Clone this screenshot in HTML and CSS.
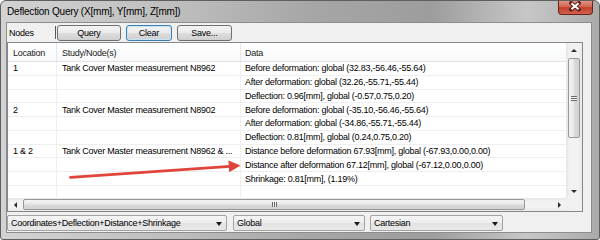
FILE: index.html
```html
<!DOCTYPE html>
<html lang="en">
<head>
    <meta charset="UTF-8">
    <title>Deflection Query</title>
    <link rel="stylesheet" href="styles.css">
</head>
<body>
    <div class="window">
        <div class="titlebar">
            <span class="title">Deflection Query (X[mm], Y[mm], Z[mm])</span>
            <div class="close-btn">
                <svg width="35" height="15" viewBox="0 0 35 15">
                    <path d="M13.5 4 L21.5 10.5 M21.5 4 L13.5 10.5" stroke="#5a1a12" stroke-width="4" stroke-linecap="round"/>
                    <path d="M13.8 4.2 L21.2 10.3 M21.2 4.2 L13.8 10.3" stroke="#fff" stroke-width="2.2"/>
                </svg>
            </div>
        </div>

        <div class="client">
            <div class="toolbar">
                <span class="nodes-label">Nodes</span>
                <span class="sep"></span>
                <button class="btn btn-query">Query</button>
                <button class="btn btn-clear">Clear</button>
                <button class="btn btn-save">Save...</button>
            </div>

            <div class="listview">
                <div class="table">
                    <div class="row header">
                        <div class="cell c1">Location</div>
                        <div class="cell c2">Study/Node(s)</div>
                        <div class="cell c3">Data</div>
                    </div>
                    <div class="row">
                        <div class="cell c1">1</div>
                        <div class="cell c2">Tank Cover Master measurement N8962</div>
                        <div class="cell c3">Before deformation: global (32.83,-56.46,-55.64)</div>
                    </div>
                    <div class="row">
                        <div class="cell c1"></div>
                        <div class="cell c2"></div>
                        <div class="cell c3">After deformation: global (32.26,-55.71,-55.44)</div>
                    </div>
                    <div class="row">
                        <div class="cell c1"></div>
                        <div class="cell c2"></div>
                        <div class="cell c3">Deflection: 0.96[mm], global (-0.57,0.75,0.20)</div>
                    </div>
                    <div class="row">
                        <div class="cell c1">2</div>
                        <div class="cell c2">Tank Cover Master measurement N8902</div>
                        <div class="cell c3">Before deformation: global (-35.10,-56.46,-55.64)</div>
                    </div>
                    <div class="row">
                        <div class="cell c1"></div>
                        <div class="cell c2"></div>
                        <div class="cell c3">After deformation: global (-34.86,-55.71,-55.44)</div>
                    </div>
                    <div class="row">
                        <div class="cell c1"></div>
                        <div class="cell c2"></div>
                        <div class="cell c3">Deflection: 0.81[mm], global (0.24,0.75,0.20)</div>
                    </div>
                    <div class="row">
                        <div class="cell c1">1 &amp; 2</div>
                        <div class="cell c2">Tank Cover Master measurement N8962 &amp; ...</div>
                        <div class="cell c3">Distance before deformation 67.93[mm], global (-67.93,0.00,0.00)</div>
                    </div>
                    <div class="row">
                        <div class="cell c1"></div>
                        <div class="cell c2"></div>
                        <div class="cell c3">Distance after deformation 67.12[mm], global (-67.12,0.00,0.00)</div>
                    </div>
                    <div class="row">
                        <div class="cell c1"></div>
                        <div class="cell c2"></div>
                        <div class="cell c3">Shrinkage: 0.81[mm], (1.19%)</div>
                    </div>
                    <div class="row filler">
                        <div class="cell c1"></div>
                        <div class="cell c2"></div>
                        <div class="cell c3"></div>
                    </div>
                </div>

                <div class="vscroll">
                    <div class="sb-btn"><span class="arr arr-up"></span></div>
                    <div class="thumb-v"><span class="grip-v"></span></div>
                    <div class="sb-space"></div>
                    <div class="sb-btn"><span class="arr arr-down"></span></div>
                </div>
                <div class="hscroll">
                    <div class="sb-btn-h"><span class="arr arr-left"></span></div>
                    <div class="thumb-h"><span class="grip-h"></span></div>
                    <div class="sb-space"></div>
                    <div class="sb-btn-h"><span class="arr arr-right"></span></div>
                </div>
                <div class="corner"></div>
            </div>

            <div class="combos">
                <div class="combo combo-mode">Coordinates+Deflection+Distance+Shrinkage<span class="drop"></span></div>
                <div class="combo combo-frame">Global<span class="drop"></span></div>
                <div class="combo combo-sys">Cartesian<span class="drop"></span></div>
            </div>
        </div>

        <!-- red callout arrow drawn over the list -->
        <svg class="callout" width="600" height="240" viewBox="0 0 600 240">
            <path d="M70.5 177.4 L230 166.3" stroke="#e0443b" stroke-width="2.8" stroke-linecap="round"/>
            <polygon points="240.5,165.4 228.4,160.4 229.3,172.2" fill="#e0443b"/>
        </svg>
    </div>
</body>
</html>
```

FILE: styles.css
```css
body {
    margin: 0;
    background: #ffffff;
    font-family: "Liberation Sans", Arial, sans-serif;
}

.window {
    position: relative;
    width: 600px;
    height: 240px;
    box-sizing: border-box;
    border: 1px solid #5f5f5f;
    border-radius: 6px 6px 3px 3px;
    background: linear-gradient(to right, #d3d3d3 0%, #bdbdbd 30%, #a6a6a6 52%, #9d9d9d 72%, #c7c7c7 88%, #aaaaaa 100%);
    display: flex;
    flex-direction: column;
    overflow: hidden;
}

.titlebar {
    height: 21px;
    flex-shrink: 0;
    display: flex;
    justify-content: space-between;
    align-items: center;
    padding-left: 6px;
}

.title {
    font-size: 10px;
    letter-spacing: -0.2px;
    color: #000;
}

.close-btn {
    align-self: flex-start;
    margin-top: -1px;
    margin-right: 6px;
    width: 35px;
    height: 15px;
    box-sizing: border-box;
    border: 1px solid #6b2319;
    border-top: none;
    border-radius: 0 0 4px 4px;
    background: linear-gradient(#e3998b, #d26a58 45%, #c0402c 55%, #d0634f);
    display: flex;
}

.close-btn svg {
    margin: -1px 0 0 -1px;
}

.client {
    flex: 1;
    margin: 0 7px 6px 5px;
    border: 1px solid #8d8d8d;
    background: #f0f0f0;
    display: flex;
    flex-direction: column;
    padding-right: 8px;
    font-size: 9px;
    letter-spacing: -0.25px;
    color: #000;
}

/* toolbar */

.toolbar {
    height: 19px;
    flex-shrink: 0;
    display: flex;
    align-items: center;
}

.nodes-label {
    width: 46px;
    padding-left: 2px;
}

.sep {
    width: 1px;
    height: 13px;
    background: #5a5a5a;
}

.btn {
    height: 16px;
    margin: 0 0 0 5px;
    padding: 0;
    box-sizing: border-box;
    border: 1px solid #707070;
    border-radius: 3px;
    background: linear-gradient(#f3f3f3, #ebebeb 48%, #dddddd 52%, #cfcfcf);
    font-family: inherit;
    font-size: 9px;
    letter-spacing: -0.25px;
    color: #000;
}

.btn-query {
    width: 64px;
    margin-left: 1px;
}

.btn-clear {
    width: 46px;
    border-color: #3c7fb1;
    box-shadow: inset 0 0 0 1px #c6e6f8;
}

.btn-save {
    width: 55px;
}

/* list view */

.listview {
    height: 170px;
    flex-shrink: 0;
    box-sizing: border-box;
    border: 1px solid #828790;
    background: #ffffff;
    display: grid;
    grid-template-columns: 1fr 16px;
    grid-template-rows: 1fr 13px;
}

.table {
    display: flex;
    flex-direction: column;
    overflow: hidden;
}

.row {
    display: flex;
    height: 13.78px;
    flex-shrink: 0;
    box-sizing: border-box;
    border-bottom: 1px solid #efefef;
}

.row.header {
    height: 19px;
    border-bottom: 1px solid #e2e2e2;
    background: linear-gradient(#ffffff, #f7f8fa);
    color: #1a1a1a;
}

.row.filler {
    flex: 1;
    border-bottom: none;
}

.cell {
    box-sizing: border-box;
    border-right: 1px solid #efefef;
    display: flex;
    align-items: center;
    white-space: nowrap;
    overflow: hidden;
}

.header .cell {
    border-right-color: #e3e6ea;
    padding-top: 1px;
}

.c1 {
    width: 49px;
    padding-left: 5px;
}

.c2 {
    width: 184px;
    padding-left: 5px;
}

.c3 {
    flex: 1;
    padding-left: 4px;
    border-right: none;
}

/* scroll bars */

.vscroll {
    display: flex;
    flex-direction: column;
    background: linear-gradient(to right, #e6e6e6, #f2f2f2 25%, #f2f2f2 75%, #e9e9e9);
}

.sb-btn {
    height: 14px;
    display: flex;
    justify-content: center;
    align-items: center;
}

.sb-space {
    flex: 1;
}

.thumb-v {
    height: 80px;
    margin: 1px 2px 0 2px;
    box-sizing: border-box;
    border: 1px solid #979797;
    border-radius: 2px;
    background: linear-gradient(to right, #f4f4f4, #e9e9e9 45%, #d9d9d9 55%, #d2d2d2);
    display: flex;
    justify-content: center;
    align-items: center;
}

.grip-v {
    width: 6px;
    height: 5px;
    background: repeating-linear-gradient(#6a6a6a 0 1px, #f0f0f0 1px 2px);
}

.hscroll {
    display: flex;
    background: linear-gradient(#e6e6e6, #f2f2f2 25%, #f2f2f2 75%, #e9e9e9);
}

.sb-btn-h {
    width: 14px;
    display: flex;
    justify-content: center;
    align-items: center;
}

.thumb-h {
    width: 502px;
    margin: 1px 0 1px 1px;
    box-sizing: border-box;
    border: 1px solid #979797;
    border-radius: 2px;
    background: linear-gradient(#f4f4f4, #e9e9e9 45%, #d9d9d9 55%, #d2d2d2);
    display: flex;
    justify-content: center;
    align-items: center;
}

.grip-h {
    width: 5px;
    height: 5px;
    background: repeating-linear-gradient(to right, #6a6a6a 0 1px, #f0f0f0 1px 2px);
}

.corner {
    background: #f0f0f0;
}

.arr {
    width: 0;
    height: 0;
    border: 3px solid transparent;
}

.arr-up {
    border-top: none;
    border-bottom: 3px solid #2a2a2a;
}

.arr-down {
    border-bottom: none;
    border-top: 3px solid #2a2a2a;
}

.arr-left {
    border-left: none;
    border-right: 3px solid #2a2a2a;
}

.arr-right {
    border-right: none;
    border-left: 3px solid #2a2a2a;
}

/* combo boxes */

.combos {
    display: flex;
    margin-top: 3px;
}

.combo {
    position: relative;
    height: 16px;
    margin-right: 6px;
    box-sizing: border-box;
    border: 1px solid #a3a3a3;
    border-radius: 2px;
    background: linear-gradient(#f5f5f5, #ededed 50%, #e3e3e3 52%, #e8e8e8);
    display: flex;
    align-items: center;
    padding-left: 3px;
}

.combo-mode {
    width: 220px;
}

.combo-frame {
    width: 132px;
    margin-right: 5px;
}

.combo-sys {
    width: 133px;
}

.drop {
    position: absolute;
    right: 4px;
    top: 6px;
    width: 0;
    height: 0;
    border-left: 3.5px solid transparent;
    border-right: 3.5px solid transparent;
    border-top: 4px solid #1a1a1a;
}

.callout {
    position: absolute;
    left: -1px;
    top: -1px;
    pointer-events: none;
}
```
